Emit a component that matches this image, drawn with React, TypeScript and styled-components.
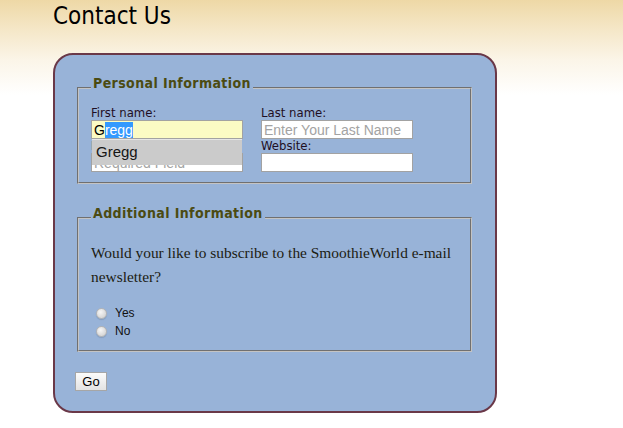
import React, { useEffect, useRef } from 'react';
import styled, { createGlobalStyle } from 'styled-components';

const GlobalStyle = createGlobalStyle`
  html, body {
    margin: 0;
    padding: 0;
  }
  body {
    min-height: 428px;
    background: #fff linear-gradient(to bottom, #eed8a6 0px, #f5e7c8 30px, #fbf5e8 60px, #ffffff 95px) no-repeat;
    font-family: "DejaVu Sans Condensed", "DejaVu Sans", sans-serif;
  }
`;

const Page = styled.div`
  padding: 0 0 0 53px;
`;

const Title = styled.h1`
  margin: 0;
  font-size: 24px;
  font-weight: normal;
  line-height: 32px;
  color: #000;
`;

const Panel = styled.form`
  box-sizing: border-box;
  width: 444px;
  height: 360px;
  margin-top: 21px;
  padding: 19px 21px 0 20px;
  border: 2px solid #6a3848;
  border-radius: 20px;
  background: #98b3d8;
`;

const Group = styled.fieldset<{ $gap?: number }>`
  margin: ${(p) => p.$gap ?? 0}px 2px 0;
  padding: 4px 12px 10px;
  border: 2px groove #c4c4c4;
  min-width: 0;
`;

const Legend = styled.legend`
  padding: 0 2px 10px;
  font-size: 14px;
  font-weight: bold;
  line-height: 18px;
  letter-spacing: 0.4px;
  color: #4b4b12;
`;

const Columns = styled.div`
  display: grid;
  grid-template-columns: 152px 152px;
  column-gap: 18px;
`;

const Column = styled.div`
  position: relative;
  display: flex;
  flex-direction: column;
`;

const Label = styled.label`
  display: block;
  font-size: 13px;
  line-height: 14px;
  color: #1f0f24;
`;

const Field = styled.input<{ $autofill?: boolean }>`
  box-sizing: border-box;
  width: 152px;
  height: 19px;
  margin: 0;
  padding: 0 2px;
  border: 1px solid #a2a2a2;
  background: ${(p) => (p.$autofill ? '#fbfbc4' : '#fff')};
  font-family: "Liberation Sans", Arial, sans-serif;
  font-size: 14px;
  color: #000;
  outline: none;

  &::placeholder {
    color: #a3a3a3;
  }

  &::selection {
    background: #3399ff;
    color: #fff;
  }
`;

const Suggest = styled.div`
  position: absolute;
  top: 33px;
  left: 1px;
  box-sizing: border-box;
  width: 150px;
  height: 26px;
  padding: 0 0 0 4px;
  border-top: 1px solid #e6e6e6;
  background: #cbcbcb;
  font-family: "Liberation Sans", Arial, sans-serif;
  font-size: 15px;
  line-height: 24px;
  color: #151515;
`;

const Question = styled.p`
  margin: 5px 0 15px;
  font-family: "Liberation Serif", "Times New Roman", serif;
  font-size: 15.4px;
  line-height: 24px;
  color: #1c1c12;
`;

const Choice = styled.label`
  display: flex;
  align-items: center;
  gap: 8px;
  height: 18px;
  padding-left: 5px;
  font-family: "Liberation Sans", Arial, sans-serif;
  font-size: 12px;
  color: #111;
`;

const Radio = styled.input`
  appearance: none;
  width: 11px;
  height: 11px;
  margin: 0;
  border: 1px solid #b4b4b4;
  border-radius: 50%;
  background: radial-gradient(circle at 40% 35%, #f6f6f6 0%, #dedede 55%, #cfcfcf 100%);
  box-shadow: 0 1px 1px rgba(0, 0, 0, 0.12);
`;

const GoButton = styled.button`
  display: block;
  box-sizing: border-box;
  width: 32px;
  height: 19px;
  margin: 20px 0 0;
  padding: 0;
  border: 1px solid #a6a6a6;
  border-radius: 0;
  background: linear-gradient(to bottom, #fbfbfb, #e3e3e3);
  font-family: "Liberation Sans", Arial, sans-serif;
  font-size: 13px;
  color: #000;
`;

export default function App() {
    const first = useRef<HTMLInputElement>(null);

    useEffect(() => {
        const el = first.current;
        if (!el) return;
        el.focus();
        el.setSelectionRange(1, 5);
    }, []);

    return <Page>
        <GlobalStyle />
        <Title>Contact Us</Title>

        <Panel onSubmit={(e) => e.preventDefault()}>
            <Group>
                <Legend>Personal Information</Legend>
                <Columns>
                    <Column>
                        <Label htmlFor="first">First name:</Label>
                        <Field id="first" ref={first} $autofill defaultValue="Gregg" />
                        <Label htmlFor="email">E-mail:</Label>
                        <Field id="email" placeholder="Required Field" />
                        <Suggest>Gregg</Suggest>
                    </Column>
                    <Column>
                        <Label htmlFor="last">Last name:</Label>
                        <Field id="last" placeholder="Enter Your Last Name" />
                        <Label htmlFor="site">Website:</Label>
                        <Field id="site" />
                    </Column>
                </Columns>
            </Group>

            <Group $gap={20}>
                <Legend>Additional Information</Legend>
                <Question>Would your like to subscribe to the SmoothieWorld e-mail newsletter?</Question>
                <Choice><Radio type="radio" name="news" value="yes" />Yes</Choice>
                <Choice><Radio type="radio" name="news" value="no" />No</Choice>
            </Group>

            <GoButton type="submit">Go</GoButton>
        </Panel>
    </Page>;
}
